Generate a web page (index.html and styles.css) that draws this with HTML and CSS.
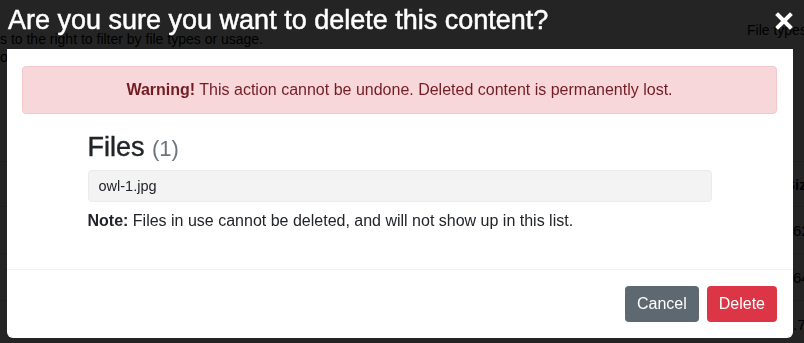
FILE: index.html
```html
<!DOCTYPE html>
<html lang="en">
<head>
    <meta charset="UTF-8">
    <meta name="viewport" content="width=device-width, initial-scale=1.0">
    <title>Media library</title>
    <link rel="stylesheet" href="styles.css">
</head>
<body>
    <div class="page">
        <div class="page-top">
            <p class="page-hint">s to the right to filter by file types or usage.</p>
            <span class="page-filter">File types</span>
        </div>
        <div class="page-side">or</div>
        <div class="page-table">
            <div class="page-row page-head"><span class="page-cell">Size</span></div>
            <div class="page-row"><span class="page-cell">62 KB</span></div>
            <div class="page-row"><span class="page-cell">64 KB</span></div>
            <div class="page-row"><span class="page-cell">.75 MB</span></div>
        </div>
    </div>

    <div class="modal-backdrop">
        <div class="modal-dialog">
            <div class="modal-header">
                <h2 class="modal-title">Are you sure you want to delete this content?</h2>
                <button class="modal-close" aria-label="Close">
                    <svg width="18" height="18" viewBox="0 0 18 18">
                        <path d="M3 3 L15 15 M15 3 L3 15" stroke="#fff" stroke-width="4" stroke-linecap="square" fill="none"/>
                    </svg>
                </button>
            </div>
            <div class="modal-content">
                <div class="modal-body">
                    <div class="alert">
                        <strong>Warning!</strong> This action cannot be undone. Deleted content is permanently lost.
                    </div>
                    <div class="file-list">
                        <h3>Files <small>(1)</small></h3>
                        <div class="file-item">owl-1.jpg</div>
                        <p class="note"><strong>Note:</strong> Files in use cannot be deleted, and will not show up in this list.</p>
                    </div>
                </div>
                <div class="modal-footer">
                    <button class="btn btn-secondary">Cancel</button>
                    <button class="btn btn-danger">Delete</button>
                </div>
            </div>
        </div>
    </div>
</body>
</html>
```

FILE: styles.css
```css
body {
    font-family: 'Liberation Sans', Arial, sans-serif;
    margin: 0;
    background-color: white;
    color: #000;
    overflow: hidden;
    height: 343px;
}

.page {
    font-size: 14px;
}

.page-top {
    display: flex;
    justify-content: space-between;
    padding-top: 22px;
}

.page-hint {
    margin: 9px 0 0;
}

.page-filter {
    margin-right: -4px;
    width: 61px;
    white-space: nowrap;
    overflow: hidden;
}

.page-side {
    margin-top: 2px;
}

.page-table {
    margin-top: 96px;
}

.page-row {
    display: flex;
    justify-content: flex-end;
    height: 46px;
    align-items: center;
    border-top: 1px solid #dee2e6;
}

.page-head {
    font-weight: bold;
    height: 44px;
}

.page-head .page-cell {
    margin-right: 8px;
}

.page-cell {
    width: 11px;
    white-space: nowrap;
    font-size: 15px;
}

.modal-backdrop {
    position: fixed;
    inset: 0;
    background-color: rgba(0, 0, 0, 0.86);
    padding: 0 11px 0 7px;
}

.modal-header {
    display: flex;
    justify-content: space-between;
    align-items: center;
    height: 49px;
}

.modal-title {
    margin: 0 0 0 1px;
    color: white;
    font-size: 27px;
    font-weight: 500;
    line-height: 1;
    padding-bottom: 8px;
    -webkit-text-stroke: 0.5px white;
}

.modal-close {
    background: none;
    border: 0;
    padding: 0;
    margin: 0 0 8px 0;
    display: flex;
}

.modal-content {
    background: white;
    border-radius: 0 0 6px 6px;
}

.modal-body {
    padding: 17px 16px 37px 15px;
}

.alert {
    background-color: #f8d7da;
    border: 1px solid #f5c6cb;
    color: #721c24;
    border-radius: 4px;
    padding: 11px 20px;
    line-height: 24px;
    font-size: 16px;
    text-align: center;
}

.file-list {
    width: 624px;
    margin: 0 auto;
    padding-top: 17px;
}

h3 {
    margin: 0 0 5px;
    font-size: 27px;
    font-weight: 500;
    color: #212529;
    line-height: 32px;
    -webkit-text-stroke: 0.4px #212529;
}

h3 small {
    font-size: 22px;
    font-weight: 400;
    color: #6c757d;
    -webkit-text-stroke: 0;
}

.file-item {
    background-color: #f3f3f3;
    border: 1px solid #ebebeb;
    border-radius: 4px;
    padding: 0 10px;
    line-height: 30px;
    font-size: 14.5px;
    color: #212529;
}

.note {
    margin: 8px 0 0;
    font-size: 16px;
    line-height: 22px;
    color: #212529;
}

.modal-footer {
    display: flex;
    justify-content: flex-end;
    gap: 8px;
    padding: 16px;
    border-top: 1px solid #eeeff1;
}

.btn {
    font-family: inherit;
    font-size: 16px;
    line-height: 24px;
    padding: 5px 11px;
    border: 1px solid transparent;
    border-radius: 4px;
    color: white;
}

.btn-secondary {
    background-color: #5e6870;
}

.btn-danger {
    background-color: #dc3545;
}
```
